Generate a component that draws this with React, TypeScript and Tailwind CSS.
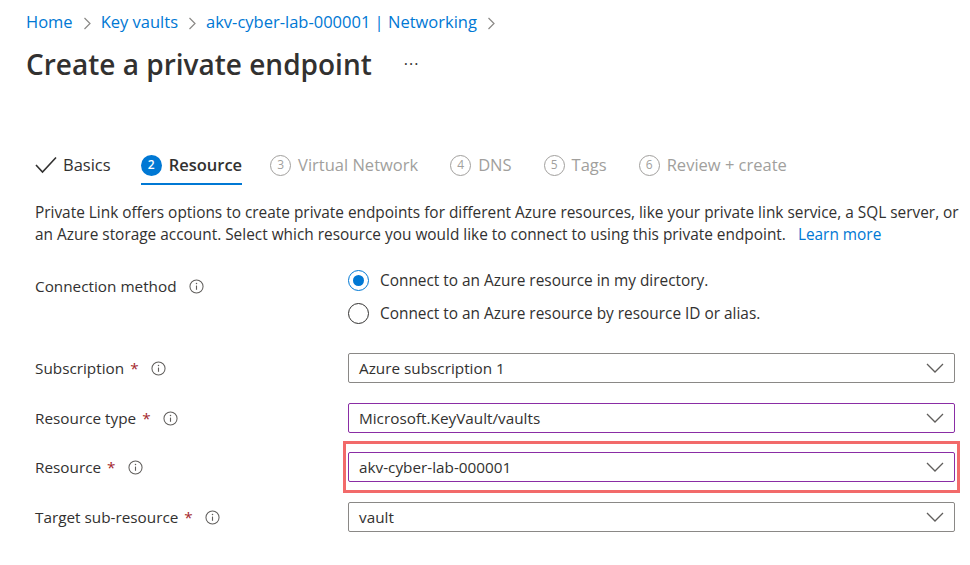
import React from "react";

const font = { fontFamily: '"Open Sans", "Noto Sans", sans-serif' };

function InfoIcon() {
  return (
    <svg width="15" height="15" viewBox="0 0 16 16" className="shrink-0">
      <circle cx="8" cy="8" r="7" fill="none" stroke="#605e5c" strokeWidth="1.1" />
      <line x1="8" y1="7" x2="8" y2="11.5" stroke="#605e5c" strokeWidth="1.2" />
      <circle cx="8" cy="4.9" r="0.8" fill="#605e5c" />
    </svg>
  );
}

function Chevron() {
  return (
    <svg width="18" height="10" viewBox="0 0 18 10" className="shrink-0">
      <polyline points="1,1 9,9 17,1" fill="none" stroke="#605e5c" strokeWidth="1.3" />
    </svg>
  );
}

function Crumb() {
  return (
    <svg width="8" height="13" viewBox="0 0 8 13" className="mx-[10px] mt-[2px] shrink-0">
      <polyline points="1.5,1 7,6.5 1.5,12" fill="none" stroke="#8a8886" strokeWidth="1.2" />
    </svg>
  );
}

function StepCircle({ n, active }: { n: number; active?: boolean }) {
  if (active) {
    return (
      <span className="flex h-[21px] w-[21px] items-center justify-center rounded-full bg-[#0078d4] text-[12px] font-semibold text-white">
        {n}
      </span>
    );
  }
  return (
    <span className="flex h-[21px] w-[21px] items-center justify-center rounded-full border border-[#a19f9d] text-[12px] text-[#a19f9d]">
      {n}
    </span>
  );
}

function Dropdown({ value, purple }: { value: string; purple?: boolean }) {
  return (
    <div
      className={
        "flex h-[30px] w-[607px] items-center justify-between rounded-[2px] border bg-white pl-[10px] pr-[10px] text-[15.3px] text-[#323130] " +
        (purple ? "border-[#8a2da5]" : "border-[#8a8886]")
      }
    >
      <span>{value}</span>
      <Chevron />
    </div>
  );
}

function Label({ text, required }: { text: string; required?: boolean }) {
  return (
    <div className="flex w-[313px] items-center text-[15.3px] text-[#323130]">
      <span>{text}</span>
      {required && <span className="ml-[6px] text-[#a4262c]">*</span>}
      <span className="ml-[12px]">
        <InfoIcon />
      </span>
    </div>
  );
}

export default function App() {
  const steps = [
    { n: 3, label: "Virtual Network" },
    { n: 4, label: "DNS" },
    { n: 5, label: "Tags" },
    { n: 6, label: "Review + create" },
  ];
  return (
    <div className="h-[565px] w-[970px] overflow-hidden bg-white" style={font}>
      <div className="pl-[26px] pt-[10px]">
        <div className="flex h-[24px] items-center text-[16.5px] text-[#0078d4]">
          <span>Home</span>
          <Crumb />
          <span>Key vaults</span>
          <Crumb />
          <span>akv-cyber-lab-000001 | Networking</span>
          <Crumb />
        </div>
        <div className="mt-[12px] flex h-[36px] items-center">
          <h1 className="text-[28px] font-semibold text-[#323130]">Create a private endpoint</h1>
          <span className="ml-[32px] text-[16px] tracking-[1px] text-[#323130]">···</span>
        </div>
      </div>

      <div className="pl-[35px]">
        <div className="mt-[65px] flex h-[38px] items-stretch">
          <div className="flex items-center gap-[6px] pb-[2px] text-[16.5px] text-[#323130]">
            <svg width="22" height="18" viewBox="0 0 22 18">
              <polyline points="1,9 7.5,16 21,1.5" fill="none" stroke="#323130" strokeWidth="1.6" />
            </svg>
            <span>Basics</span>
          </div>
          <div className="ml-[30px] flex items-center gap-[7px] border-b-2 border-[#0078d4] text-[16.5px] font-semibold text-[#323130]">
            <StepCircle n={2} active />
            <span>Resource</span>
          </div>
          {steps.map((s, i) => (
            <div
              key={s.n}
              className={
                "flex items-center gap-[7px] pb-[2px] text-[16.5px] text-[#a19f9d] " +
                (i === 0 ? "ml-[28px]" : "ml-[32px]")
              }
            >
              <StepCircle n={s.n} />
              <span>{s.label}</span>
            </div>
          ))}
        </div>

        <div className="mt-[17px] flex flex-col text-[15.4px] leading-[22px] text-[#323130]">
          <div className="whitespace-nowrap">
            Private Link offers options to create private endpoints for different Azure resources, like your private link service, a SQL server, or
          </div>
          <div className="flex whitespace-nowrap">
            <span>an Azure storage account. Select which resource you would like to connect to using this private endpoint.</span>
            <span className="ml-[12px] text-[#0078d4]">Learn more</span>
          </div>
        </div>

        <div className="mt-[24px] flex">
          <div className="pt-[5px]">
            <Label text="Connection method" />
          </div>
          <div className="flex flex-col gap-[12px] text-[15.4px] leading-[21px] text-[#323130]">
            <div className="flex items-center gap-[11px]">
              <span className="flex h-[21px] w-[21px] items-center justify-center rounded-full border border-[#0078d4]">
                <span className="h-[11px] w-[11px] rounded-full bg-[#0078d4]" />
              </span>
              <span>Connect to an Azure resource in my directory.</span>
            </div>
            <div className="flex items-center gap-[11px]">
              <span className="h-[21px] w-[21px] rounded-full border border-[#323130]" />
              <span>Connect to an Azure resource by resource ID or alias.</span>
            </div>
          </div>
        </div>

        <div className="mt-[29px] flex flex-col">
          <div className="flex h-[30px] items-center">
            <Label text="Subscription" required />
            <Dropdown value="Azure subscription 1" />
          </div>
          <div className="mt-[20px] flex h-[30px] items-center">
            <Label text="Resource type" required />
            <Dropdown value="Microsoft.KeyVault/vaults" purple />
          </div>
          <div className="mt-[19px] flex h-[30px] items-center">
            <Label text="Resource" required />
            <div className="relative">
              <Dropdown value="akv-cyber-lab-000001" purple />
              <div className="pointer-events-none absolute -left-[5px] -right-[5px] -top-[11px] -bottom-[11px] border-[3px] border-[#f26a6a]" />
            </div>
          </div>
          <div className="mt-[20px] flex h-[30px] items-center">
            <Label text="Target sub-resource" required />
            <Dropdown value="vault" />
          </div>
        </div>
      </div>
    </div>
  );
}
